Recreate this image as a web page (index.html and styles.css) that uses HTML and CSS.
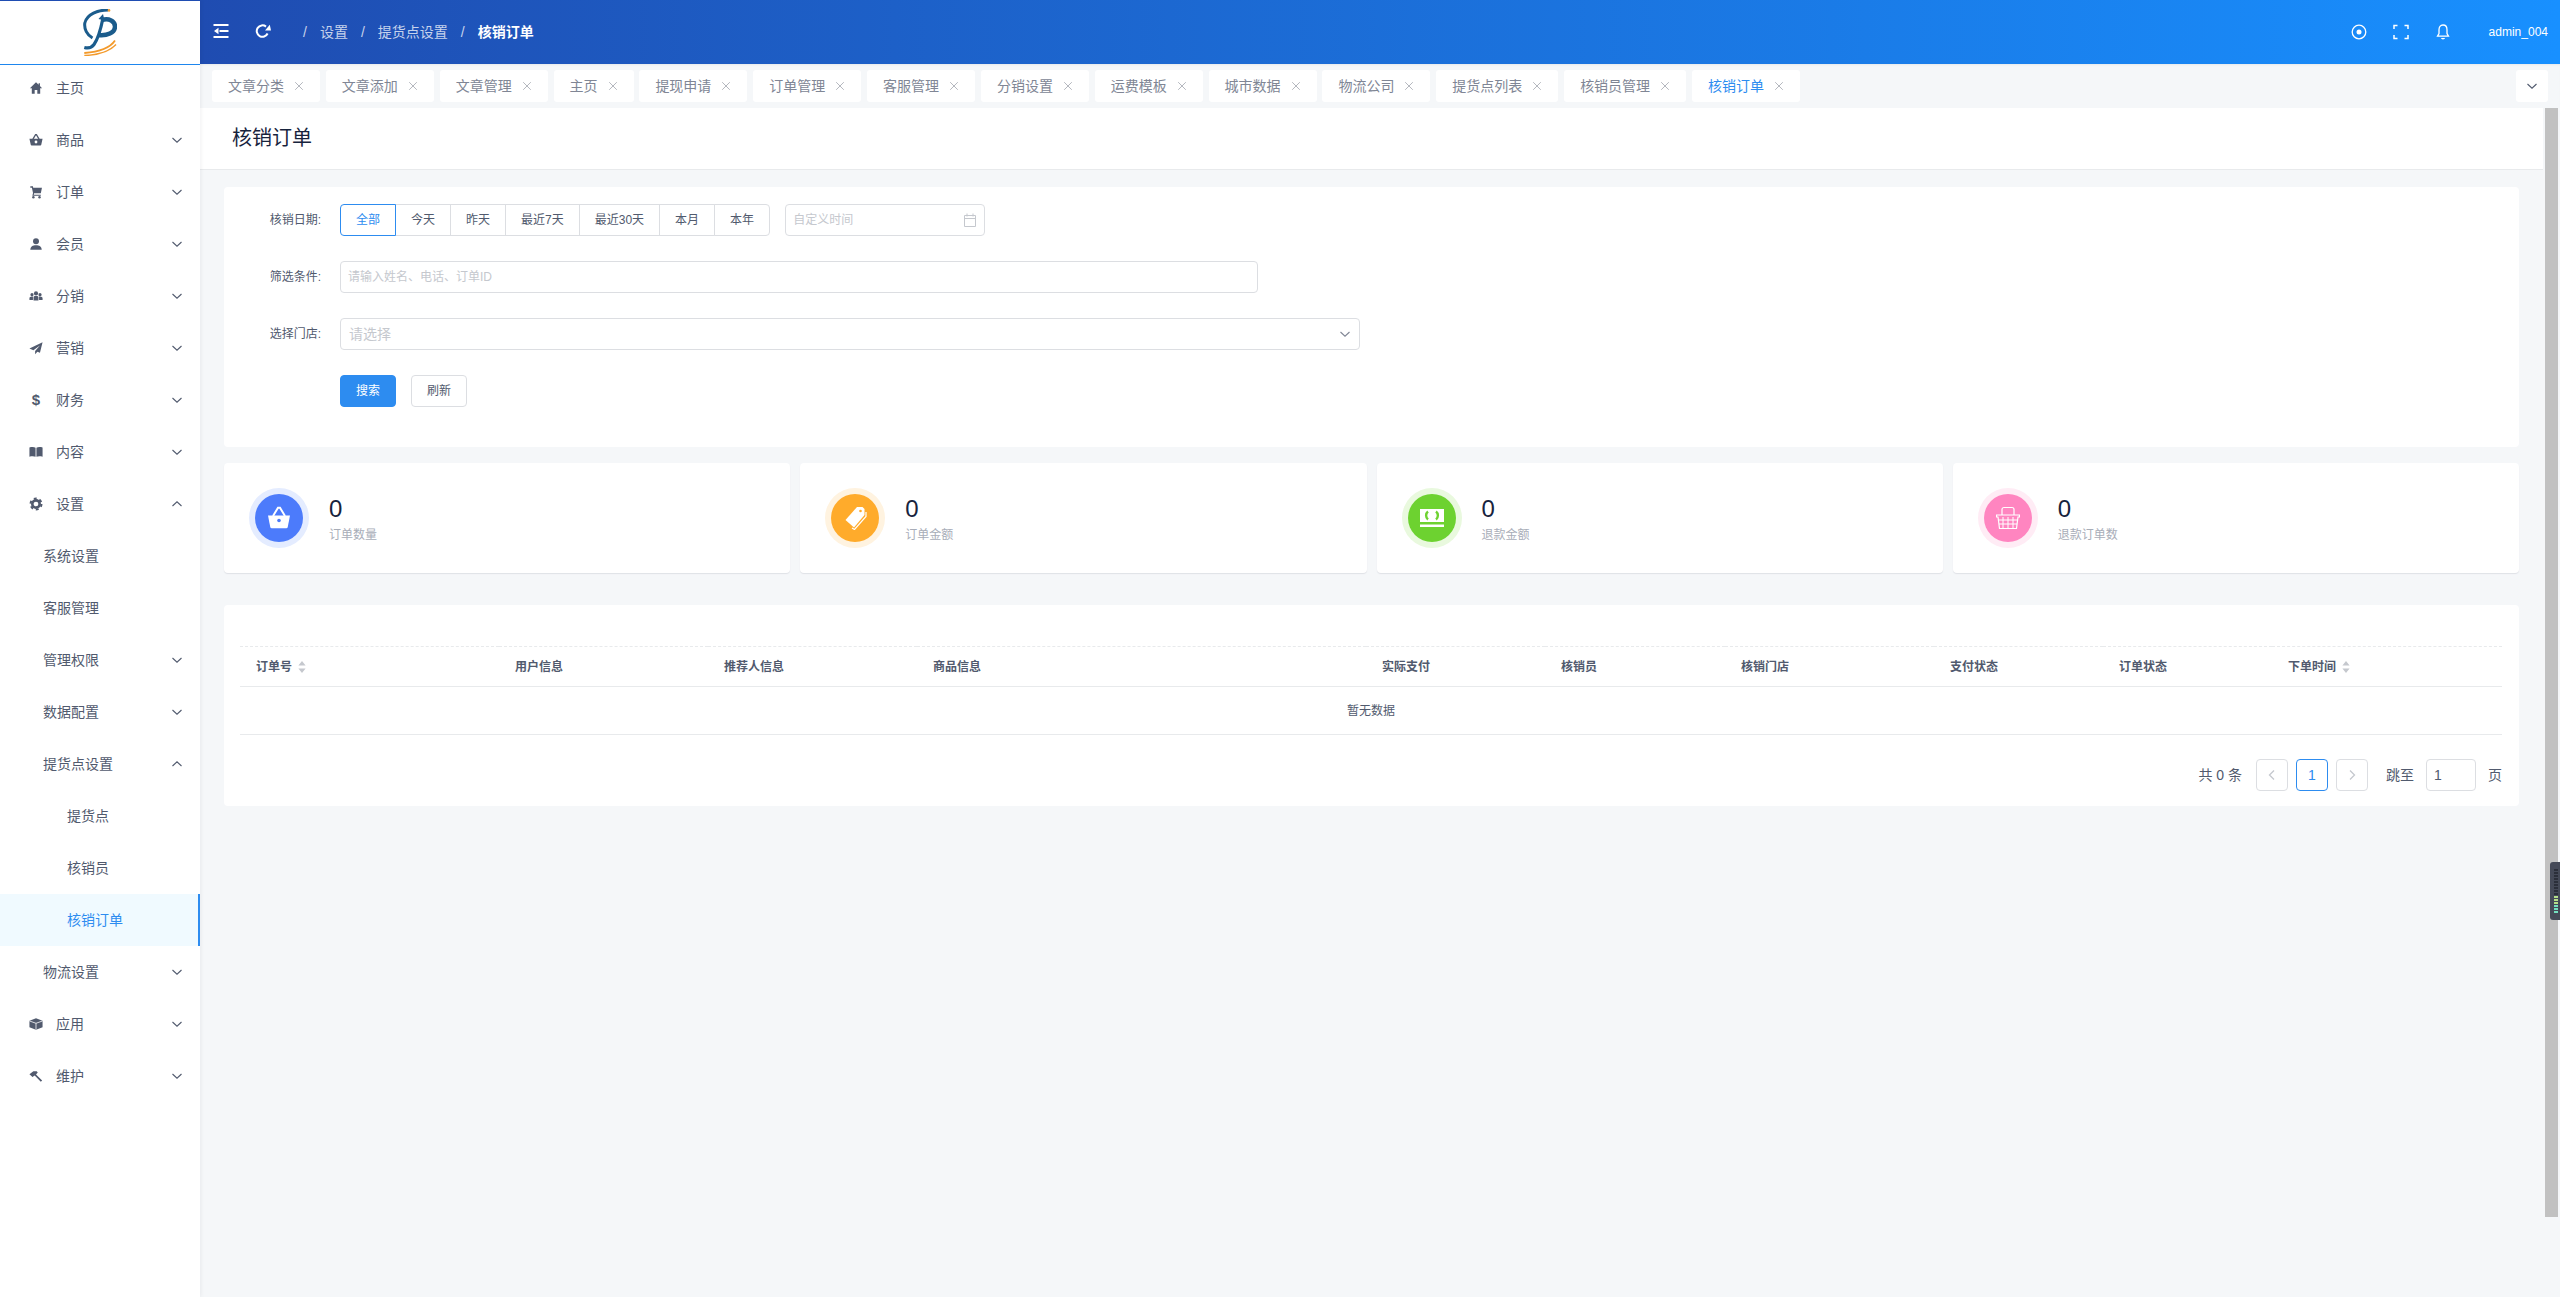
FILE: index.html
```html
<!DOCTYPE html>
<html lang="zh-CN">
<head>
  <meta charset="UTF-8">
  <meta name="viewport" content="width=device-width, initial-scale=1.0">
  <title>核销订单</title>
  <link rel="stylesheet" href="styles.css">
</head>
<body>

  <!-- shared icons -->
  <svg class="sprite" xmlns="http://www.w3.org/2000/svg">
    <symbol id="down" viewBox="0 0 12 12"><path d="M1.5 4l4.5 4.2L10.5 4" fill="none" stroke="currentColor" stroke-width="1.1"/></symbol>
    <symbol id="up" viewBox="0 0 12 12"><path d="M1.5 8L6 3.8 10.5 8" fill="none" stroke="currentColor" stroke-width="1.1"/></symbol>
    <symbol id="close" viewBox="0 0 10 10"><path d="M1.2 1.2l7.6 7.6M8.8 1.2L1.2 8.8" fill="none" stroke="currentColor" stroke-width="1"/></symbol>
    <symbol id="sort" viewBox="0 0 8 14"><path d="M4 1l3.6 4.6H.4zM4 13L.4 8.4h7.2z" fill="currentColor"/></symbol>
  </svg>

  <aside class="sidebar">
    <div class="logo">
      <svg width="34" height="47" viewBox="0 0 34 47" fill="none">
        <path d="M25 1C15 1 4 5 1.800 14 1 20 4 26 9.500 29" stroke="#1b5c8c" stroke-width="3"/>
        <path d="M20 9C18 19 15 30 11 35.500 8.500 39 5 39.500 1.300 38.500" stroke="#1b5c8c" stroke-width="3.200"/>
        <path d="M19 11C26 9 32 12 32 17.500 32 24 24 27 15 26" stroke="#1b5c8c" stroke-width="4.500"/>
        <path d="M20 5l-4.500 5 6 1.500z" fill="#1b5c8c"/>
        <path d="M32 31.500C27 39 15 43 1.300 44" stroke="#f39a2b" stroke-width="1.800"/>
        <path d="M33 35.500C27 42 15 46 1.300 46.500" stroke="#f39a2b" stroke-width="1.500"/>
        <circle cx="26" cy="1.400" r="1.300" fill="#f39a2b"/>
      </svg>
    </div>
    <nav class="menu">
      <a class="menu-item">
        <svg class="menu-icon" viewBox="0 0 16 16"><path d="M8 1.500L1 8.200h2.200V14.500h3.300v-4.300h3v4.300h3.300V8.200H15l-2.500-2.400V2.500H11v1.900z"/></svg>
        <span>主页</span>
      </a>
      <a class="menu-item">
        <svg class="menu-icon" viewBox="0 0 16 16"><path d="M.5 6.500h15l-1.500 7a1 1 0 0 1-1 .8H3a1 1 0 0 1-1-.8z"/><path d="M4.500 7l3-5h1l3 5" fill="none" stroke="currentColor" stroke-width="1.500"/><circle cx="8" cy="10.300" r="1.600" fill="#fff"/></svg>
        <span>商品</span>
        <svg class="arrow"><use href="#down"/></svg>
      </a>
      <a class="menu-item">
        <svg class="menu-icon" viewBox="0 0 16 16"><path d="M1.500 1.500h3l.3 1.500h10l-1.300 6.500H5.800L5.500 11h8v1.300H3.800l.8-3.300-1.300-6H1.500z"/><circle cx="5" cy="14" r="1.400"/><circle cx="12" cy="14" r="1.400"/></svg>
        <span>订单</span>
        <svg class="arrow"><use href="#down"/></svg>
      </a>
      <a class="menu-item">
        <svg class="menu-icon" viewBox="0 0 16 16"><circle cx="8" cy="4.800" r="3.400"/><path d="M1.500 14.500c0-3.600 2.800-5.200 6.500-5.200s6.500 1.600 6.500 5.200z"/></svg>
        <span>会员</span>
        <svg class="arrow"><use href="#down"/></svg>
      </a>
      <a class="menu-item">
        <svg class="menu-icon" viewBox="0 0 16 16"><circle cx="8" cy="5" r="2.400"/><circle cx="3.400" cy="6.500" r="1.800"/><circle cx="12.600" cy="6.500" r="1.800"/><path d="M5.200 13V9.500C5.200 8.500 6 8 8 8s2.800.5 2.800 1.500V13zM.5 12.500V10.500c0-1 1-2 3-2h1v4zM15.500 12.500V10.500c0-1-1-2-3-2h-1v4z"/></svg>
        <span>分销</span>
        <svg class="arrow"><use href="#down"/></svg>
      </a>
      <a class="menu-item">
        <svg class="menu-icon" viewBox="0 0 16 16"><path d="M15.500 1.500L.5 8.500l4.500 2L12.500 5 7 11.500v3.500l2.600-2.800 2.900 1.300z"/></svg>
        <span>营销</span>
        <svg class="arrow"><use href="#down"/></svg>
      </a>
      <a class="menu-item">
        <span class="menu-glyph">$</span>
        <span>财务</span>
        <svg class="arrow"><use href="#down"/></svg>
      </a>
      <a class="menu-item">
        <svg class="menu-icon" viewBox="0 0 16 16"><path d="M.5 2.800C3 2.100 6 2.100 7.500 3.100v10.400C6 12.700 3 12.700.5 13.300zM15.500 2.800C13 2.100 10 2.100 8.500 3.100v10.400c1.500-.8 4.500-.8 7-.2z"/></svg>
        <span>内容</span>
        <svg class="arrow"><use href="#down"/></svg>
      </a>
      <a class="menu-item">
        <svg class="menu-icon" viewBox="0 0 16 16"><circle cx="8" cy="8" r="4.200" fill="none" stroke="currentColor" stroke-width="3"/><circle cx="8" cy="8" r="6.300" fill="none" stroke="currentColor" stroke-width="2.200" stroke-dasharray="3.300 3.300"/></svg>
        <span>设置</span>
        <svg class="arrow"><use href="#up"/></svg>
      </a>
      <a class="menu-item sub"><span>系统设置</span></a>
      <a class="menu-item sub"><span>客服管理</span></a>
      <a class="menu-item sub"><span>管理权限</span><svg class="arrow"><use href="#down"/></svg></a>
      <a class="menu-item sub"><span>数据配置</span><svg class="arrow"><use href="#down"/></svg></a>
      <a class="menu-item sub"><span>提货点设置</span><svg class="arrow"><use href="#up"/></svg></a>
      <a class="menu-item sub-2"><span>提货点</span></a>
      <a class="menu-item sub-2"><span>核销员</span></a>
      <a class="menu-item sub-2 active"><span>核销订单</span></a>
      <a class="menu-item sub"><span>物流设置</span><svg class="arrow"><use href="#down"/></svg></a>
      <a class="menu-item">
        <svg class="menu-icon" viewBox="0 0 16 16"><path d="M8 1.500l7.500 2.700v7.600L8 14.500.5 11.800V4.200z"/><path d="M.5 4.500L8 7.200l7.500-2.700M8 7.200v7" fill="none" stroke="#fff" stroke-width=".9"/></svg>
        <span>应用</span>
        <svg class="arrow"><use href="#down"/></svg>
      </a>
      <a class="menu-item">
        <svg class="menu-icon" viewBox="0 0 16 16"><path d="M.5 6l4.500-3.500h3.800L10 4 8 6.200 15 13l-1.500 1.500L6.500 7.500 4 9.200z"/></svg>
        <span>维护</span>
        <svg class="arrow"><use href="#down"/></svg>
      </a>
    </nav>
  </aside>

  <div class="main">
    <header class="topbar">
      <svg class="top-icon" viewBox="0 0 16 14" fill="#fff"><path d="M.5 0h15v2H.5zM6.500 6h9v2h-9zM.5 12h15v2H.5zM5.500 3.800v6.400L1 7z"/></svg>
      <svg class="top-icon refresh" viewBox="0 0 16 14" fill="none" stroke="#fff" stroke-width="2"><path d="M12.600 9.500A5.700 5.700 0 1 1 11 2.600"/><path d="M10 6.500h6L14.800.8z" fill="#fff" stroke="none"/></svg>
      <ol class="crumbs">
        <li>设置</li>
        <li>提货点设置</li>
        <li class="current">核销订单</li>
      </ol>
      <div class="top-right">
        <svg class="top-tool" viewBox="0 0 16 16" fill="none" stroke="#fff" stroke-width="1.300"><circle cx="8" cy="8" r="6.800"/><circle cx="8" cy="8" r="2.500" fill="#fff" stroke="none"/></svg>
        <svg class="top-tool" viewBox="0 0 16 16" fill="none" stroke="#fff" stroke-width="1.500"><path d="M1 5V1.500h3.500M11.500 1.500H15V5M15 11v3.500h-3.500M4.500 14.500H1V11"/></svg>
        <svg class="top-tool" viewBox="0 0 16 16" fill="none" stroke="#fff" stroke-width="1.300"><path d="M8 1c2.700 0 4 2 4 4.800v3.700l1.500 2.700h-11L4 9.500V5.800C4 3 5.300 1 8 1z"/><path d="M6.500 14c.4 1 2.600 1 3 0"/></svg>
        <span class="user">admin_004</span>
      </div>
    </header>

    <div class="tabs">
      <div class="tab"><span>文章分类</span><svg class="tab-close"><use href="#close"/></svg></div>
      <div class="tab"><span>文章添加</span><svg class="tab-close"><use href="#close"/></svg></div>
      <div class="tab"><span>文章管理</span><svg class="tab-close"><use href="#close"/></svg></div>
      <div class="tab"><span>主页</span><svg class="tab-close"><use href="#close"/></svg></div>
      <div class="tab"><span>提现申请</span><svg class="tab-close"><use href="#close"/></svg></div>
      <div class="tab"><span>订单管理</span><svg class="tab-close"><use href="#close"/></svg></div>
      <div class="tab"><span>客服管理</span><svg class="tab-close"><use href="#close"/></svg></div>
      <div class="tab"><span>分销设置</span><svg class="tab-close"><use href="#close"/></svg></div>
      <div class="tab"><span>运费模板</span><svg class="tab-close"><use href="#close"/></svg></div>
      <div class="tab"><span>城市数据</span><svg class="tab-close"><use href="#close"/></svg></div>
      <div class="tab"><span>物流公司</span><svg class="tab-close"><use href="#close"/></svg></div>
      <div class="tab"><span>提货点列表</span><svg class="tab-close"><use href="#close"/></svg></div>
      <div class="tab"><span>核销员管理</span><svg class="tab-close"><use href="#close"/></svg></div>
      <div class="tab tab-on"><span>核销订单</span><svg class="tab-close"><use href="#close"/></svg></div>
      <div class="tab-more"><svg class="arrow-more"><use href="#down"/></svg></div>
    </div>

    <div class="content">
      <div class="page-head"><h1>核销订单</h1></div>

      <form class="card filter">
        <div class="field">
          <label>核销日期:</label>
          <div class="radios">
            <span class="radio on">全部</span>
            <span class="radio">今天</span>
            <span class="radio">昨天</span>
            <span class="radio">最近7天</span>
            <span class="radio">最近30天</span>
            <span class="radio">本月</span>
            <span class="radio">本年</span>
          </div>
          <div class="date-box">
            <span>自定义时间</span>
            <svg class="cal" viewBox="0 0 12 14" fill="none" stroke="#c5c8ce"><path d="M.5 2.500h11v11H.5zM.5 5.500h11M3 .5v3M9 .5v3"/></svg>
          </div>
        </div>
        <div class="field">
          <label for="keyword">筛选条件:</label>
          <input class="text-input" type="text" id="keyword" placeholder="请输入姓名、电话、订单ID">
        </div>
        <div class="field">
          <label>选择门店:</label>
          <div class="select-box">
            <span>请选择</span>
            <svg class="select-arrow"><use href="#down"/></svg>
          </div>
        </div>
        <div class="field actions">
          <button type="button" class="btn btn-primary">搜索</button>
          <button type="button" class="btn">刷新</button>
        </div>
      </form>

      <div class="stats">
        <div class="stat">
          <div class="ring blue">
            <svg viewBox="0 0 24 24" width="24" height="24"><path d="M1 9.500h22l-2.300 11.800a1.500 1.500 0 0 1-1.400 1H4.700a1.500 1.500 0 0 1-1.400-1z" fill="#fff"/><path d="M6 10l5-8.200h2l5 8.200" fill="none" stroke="#fff" stroke-width="2"/><circle cx="12" cy="14.500" r="1.800" fill="#4c7bfb"/></svg>
          </div>
          <div class="stat-text"><strong>0</strong><span>订单数量</span></div>
        </div>
        <div class="stat">
          <div class="ring orange">
            <svg viewBox="0 0 24 24" width="24" height="24"><path d="M14 1h5.500l2 2v6L11 21.500 2.500 14z" fill="#fff"/><path d="M23 6v4.500L11.500 23.500 9 22" fill="none" stroke="#fff" stroke-width="1.200"/><circle cx="17.500" cy="5" r="1.300" fill="#ffab2b"/></svg>
          </div>
          <div class="stat-text"><strong>0</strong><span>订单金额</span></div>
        </div>
        <div class="stat">
          <div class="ring green">
            <svg viewBox="0 0 24 18" width="24" height="18"><path d="M0 0h24v13H0z" fill="#fff"/><path d="M0 15.500h24V18H0z" fill="#fff"/><path d="M8 2.500C5.500 4.500 5.500 8.500 8 10.500M16 2.500c2.500 2 2.500 6 0 8" fill="none" stroke="#6dd230" stroke-width="2.400"/></svg>
          </div>
          <div class="stat-text"><strong>0</strong><span>退款金额</span></div>
        </div>
        <div class="stat">
          <div class="ring pink">
            <svg viewBox="0 0 24 24" width="24" height="24" fill="none" stroke="#fff" stroke-width="1"><path d="M6 9V3.500a2 2 0 0 1 2-2h8a2 2 0 0 1 2 2V9" stroke-width="1.200"/><path d="M.5 9h23v2h-1.500l-1.500 11.500h-17L2 11H.5z" stroke-width="1.200"/><path d="M2.500 14h19M3 18h18M7 11v11M12 11v11M17 11v11"/></svg>
          </div>
          <div class="stat-text"><strong>0</strong><span>退款订单数</span></div>
        </div>
      </div>

      <div class="card orders">
        <table class="order-table">
          <thead>
            <tr>
              <th>订单号<svg class="sort"><use href="#sort"/></svg></th>
              <th>用户信息</th>
              <th>推荐人信息</th>
              <th>商品信息</th>
              <th>实际支付</th>
              <th>核销员</th>
              <th>核销门店</th>
              <th>支付状态</th>
              <th>订单状态</th>
              <th>下单时间<svg class="sort"><use href="#sort"/></svg></th>
            </tr>
          </thead>
          <tbody>
            <tr><td colspan="10">暂无数据</td></tr>
          </tbody>
        </table>
        <div class="pager">
          <span class="total">共 0 条</span>
          <span class="page-btn"><svg class="page-arrow" viewBox="0 0 10 12" fill="none" stroke="#c5c8ce" stroke-width="1.300"><path d="M7 1.500L2.500 6 7 10.500"/></svg></span>
          <span class="page-btn page-on">1</span>
          <span class="page-btn"><svg class="page-arrow" viewBox="0 0 10 12" fill="none" stroke="#c5c8ce" stroke-width="1.300"><path d="M3 1.500L7.500 6 3 10.500"/></svg></span>
          <span class="jump">跳至</span>
          <input class="jump-input" type="text" value="1">
          <span class="jump-end">页</span>
        </div>
      </div>
    </div>

    <!-- custom scrollbar and the docked handle lie over the content -->
    <div class="scroll-thumb"></div>
    <div class="dock">
      <i></i><i></i><i></i><i></i><i></i><i></i><i></i><i></i><i></i>
      <i class="lime"></i><i class="lime"></i><i class="lime"></i>
      <i class="mint"></i><i class="mint"></i><i class="mint"></i>
    </div>
  </div>

</body>
</html>
```

FILE: styles.css
```css
* {
  box-sizing: border-box;
}
html, body {
  height: 100%;
}
body {
  display: flex;
  margin: 0;
  overflow: hidden;
  background-color: #f5f7f9;
  color: #515a6e;
  font-family: "Liberation Sans", "Noto Sans CJK SC", sans-serif;
  font-size: 12px;
  line-height: 1.5;
}
.sprite {
  display: none;
}

/* sidebar */
.sidebar {
  flex: 0 0 200px;
  background-color: #fff;
  box-shadow: 1px 0 4px rgba(0, 21, 41, .06);
  z-index: 2;
}
.logo {
  position: relative;
  display: flex;
  align-items: center;
  justify-content: center;
  height: 65px;
  background-color: #fff;
  border-top: 1px solid #1f4db2;
  border-bottom: 1px solid #1e86ee;
  z-index: 1;
}
.menu {
  margin-top: -3px;
}
.menu-item {
  display: flex;
  align-items: center;
  height: 52px;
  padding-left: 29px;
  font-size: 14px;
  color: #515a6e;
}
.menu-icon {
  flex: none;
  width: 14px;
  height: 14px;
  margin-right: 13px;
  fill: currentColor;
}
.menu-glyph {
  flex: none;
  width: 14px;
  margin-right: 13px;
  font-weight: bold;
  font-size: 15px;
  text-align: center;
}
.menu-item .arrow {
  width: 12px;
  height: 12px;
  margin-left: auto;
  margin-right: 17px;
}
.menu-item.sub {
  padding-left: 43px;
}
.menu-item.sub-2 {
  padding-left: 67px;
}
.menu-item.active {
  background-color: #f0faff;
  border-right: 2px solid #2d8cf0;
  color: #2d8cf0;
}

/* top bar */
.main {
  position: relative;
  flex: 1;
  min-width: 0;
}
.topbar {
  display: flex;
  align-items: center;
  height: 64px;
  padding: 0 12px 0 13px;
  background: linear-gradient(90deg, #1f4cb1 0%, #1890ff 100%);
  color: #fff;
}
.top-icon {
  flex: none;
  width: 16px;
  height: 14px;
  margin-top: -2px;
}
.refresh {
  margin-left: 26px;
}
.crumbs {
  display: flex;
  margin: 0 0 0 32px;
  padding: 0;
  list-style: none;
  font-size: 14px;
  color: rgba(255, 255, 255, .75);
}
.crumbs li::before {
  content: "/";
  margin-right: 13px;
}
.crumbs li {
  margin-right: 13px;
}
.crumbs .current {
  color: #fff;
  font-weight: bold;
}
.crumbs .current::before {
  color: rgba(255, 255, 255, .75);
  font-weight: normal;
}
.top-right {
  display: flex;
  align-items: center;
  margin-left: auto;
}
.top-tool {
  width: 16px;
  height: 16px;
  margin-right: 26px;
}
.user {
  margin-left: 12px;
  color: #fff;
  font-size: 12px;
}

/* tag row */
.tabs {
  display: flex;
  align-items: center;
  gap: 5.85px;
  height: 44px;
  padding: 0 12px;
  box-shadow: inset 0 2px 3px -2px rgba(0, 21, 41, .12);
}
.tab {
  display: flex;
  align-items: center;
  height: 32px;
  padding: 0 16px;
  background-color: #fff;
  border-radius: 3px;
  color: #808695;
  font-size: 14px;
}
.tab-close {
  width: 10px;
  height: 10px;
  margin-left: 10px;
  color: #b5b8bf;
}
.tab-on {
  color: #2d8cf0;
}
.tab-more {
  display: flex;
  align-items: center;
  justify-content: center;
  width: 32px;
  height: 32px;
  margin-left: auto;
  background-color: #fff;
  border-radius: 3px;
}
.arrow-more {
  width: 12px;
  height: 12px;
}

/* content column */
.content {
  width: 2343px;
}
.page-head {
  height: 62px;
  padding-left: 32px;
  background-color: #fff;
  border-bottom: 1px solid #e8eaec;
}
.page-head h1 {
  margin: 0;
  color: #17233d;
  font-size: 20px;
  font-weight: normal;
  line-height: 60px;
}
.card {
  margin: 17px 24px 0;
  background-color: #fff;
  border-radius: 4px;
}

/* filter form */
.filter {
  height: 260px;
  padding-top: 17px;
}
.field {
  display: flex;
  align-items: center;
  height: 32px;
  margin-bottom: 25px;
}
.field label {
  flex: 0 0 116px;
  padding-right: 19px;
  text-align: right;
  line-height: 32px;
}
.radios {
  display: flex;
  flex: none;
  height: 32px;
}
.radio {
  display: flex;
  align-items: center;
  margin-left: -1px;
  padding: 0 15px;
  background-color: #fff;
  border: 1px solid #dcdee2;
  white-space: nowrap;
}
.radio:first-child {
  margin-left: 0;
  border-radius: 4px 0 0 4px;
}
.radio:last-child {
  border-radius: 0 4px 4px 0;
}
.radio.on {
  position: relative;
  border-color: #2d8cf0;
  color: #2d8cf0;
}
.date-box {
  display: flex;
  align-items: center;
  justify-content: space-between;
  width: 200px;
  height: 32px;
  margin-left: 15px;
  padding: 0 8px 0 7px;
  border: 1px solid #dcdee2;
  border-radius: 4px;
  color: #c5c8ce;
}
.cal {
  width: 12px;
  height: 14px;
}
.text-input {
  width: 918px;
  height: 32px;
  padding: 0 7px;
  border: 1px solid #dcdee2;
  border-radius: 4px;
  color: #515a6e;
  font: inherit;
}
.text-input::placeholder {
  color: #c5c8ce;
}
.select-box {
  display: flex;
  align-items: center;
  justify-content: space-between;
  width: 1020px;
  height: 32px;
  padding: 0 8px;
  border: 1px solid #dcdee2;
  border-radius: 4px;
  color: #c5c8ce;
  font-size: 14px;
}
.select-arrow {
  width: 12px;
  height: 12px;
  color: #808695;
}
.actions {
  padding-left: 116px;
}
.btn {
  width: 56px;
  height: 32px;
  margin-right: 15px;
  padding: 0;
  background-color: #fff;
  border: 1px solid #dcdee2;
  border-radius: 4px;
  color: #515a6e;
  font: inherit;
}
.btn-primary {
  background-color: #2d8cf0;
  border-color: #2d8cf0;
  color: #fff;
}

/* summary cards */
.stats {
  display: flex;
  gap: 10px;
  margin: 16px 24px 0;
}
.stat {
  flex: 1;
  display: flex;
  align-items: center;
  height: 110px;
  padding-left: 25px;
  background-color: #fff;
  border-radius: 4px;
  box-shadow: 0 1px 1px #dfe1e6;
}
.ring {
  display: flex;
  align-items: center;
  justify-content: center;
  width: 48px;
  height: 48px;
  margin: 6px;
  border-radius: 50%;
}
.blue {
  background-color: #4c7bfb;
  box-shadow: 0 0 0 6px #e4ecff;
}
.orange {
  background-color: #ffab2b;
  box-shadow: 0 0 0 6px #fff3e0;
}
.green {
  background-color: #6dd230;
  box-shadow: 0 0 0 6px #e9f9de;
}
.pink {
  background-color: #ff85c0;
  box-shadow: 0 0 0 6px #ffecf5;
}
.stat-text {
  display: flex;
  flex-direction: column;
  margin-left: 20px;
}
.stat-text strong {
  color: #17233d;
  font-size: 24px;
  font-weight: normal;
  line-height: 32px;
}
.stat-text span {
  margin-top: 2px;
  color: #a8adb8;
  line-height: 16px;
}

/* order table */
.orders {
  height: 201px;
  margin-top: 32px;
  padding: 41px 17px 0 16px;
}
.order-table {
  width: 100%;
  border-collapse: collapse;
  table-layout: fixed;
}
.order-table th {
  height: 40px;
  padding: 0 0 0 16px;
  border-top: 1px dashed #e8eaec;
  border-bottom: 1px solid #e8eaec;
  font-weight: bold;
  text-align: left;
}
.order-table th:nth-child(1) { width: 259px; }
.order-table th:nth-child(2),
.order-table th:nth-child(3),
.order-table th:nth-child(7) { width: 209px; }
.order-table th:nth-child(4) { width: 449px; }
.order-table th:nth-child(5) { width: 179px; }
.order-table th:nth-child(6) { width: 180px; }
.order-table th:nth-child(8),
.order-table th:nth-child(9) { width: 169px; }
.order-table td {
  height: 48px;
  border-bottom: 1px solid #e8eaec;
  text-align: center;
}
.sort {
  width: 8px;
  height: 14px;
  margin-left: 6px;
  vertical-align: -3px;
  color: #c5c8ce;
}
.pager {
  display: flex;
  align-items: center;
  justify-content: flex-end;
  margin-top: 24px;
  font-size: 14px;
}
.total {
  margin-right: 14px;
}
.page-btn {
  display: flex;
  align-items: center;
  justify-content: center;
  width: 32px;
  height: 32px;
  margin-right: 8px;
  border: 1px solid #dcdee2;
  border-radius: 4px;
}
.page-on {
  border-color: #2d8cf0;
  color: #2d8cf0;
}
.page-arrow {
  width: 10px;
  height: 12px;
}
.jump {
  margin-left: 10px;
}
.jump-input {
  width: 50px;
  height: 32px;
  margin: 0 12px;
  padding: 0 7px;
  border: 1px solid #dcdee2;
  border-radius: 4px;
  color: #515a6e;
  font: inherit;
}

/* overlays */
.scroll-thumb {
  position: absolute;
  top: 108px;
  right: 2px;
  width: 13px;
  height: 1109px;
  background-color: #c1c1c1;
}
.dock {
  position: absolute;
  top: 862px;
  right: 0;
  display: flex;
  flex-direction: column;
  gap: 1px;
  width: 10px;
  height: 58px;
  padding: 7px 0 0 4px;
  background-color: #454a58;
  border-radius: 3px 0 0 3px;
}
.dock i {
  display: block;
  flex: none;
  width: 4px;
  height: 2px;
  background-color: #2b2f3a;
}
.dock .lime {
  background-color: #b4e08a;
}
.dock .mint {
  background-color: #74e0c0;
}
```
